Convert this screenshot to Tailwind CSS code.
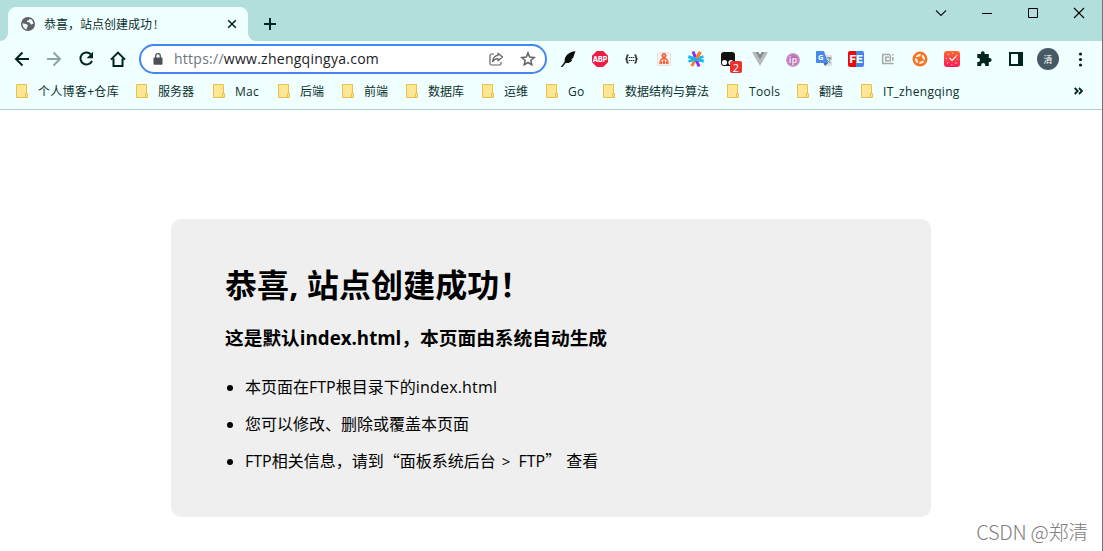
<!DOCTYPE html>
<html lang="zh-CN">
<head>
  <meta charset="UTF-8" />
  <meta name="viewport" content="width=device-width,initial-scale=1" />
  <title>恭喜,站点创建成功!</title>
  <script src="https://cdn.jsdelivr.net/npm/@tailwindcss/browser@4"></script>
</head>
<body class="h-screen overflow-hidden bg-white text-black font-['Open_Sans','Noto_Sans_CJK_SC',sans-serif]">
<div class="relative h-[551px] w-[1103px] overflow-hidden border-r border-[#6f7274]">

  <!-- Tab strip -->
  <div class="flex h-[41px] items-start bg-[#b2dfdb]">
    <div class="flex h-[41px] w-2 items-end bg-[#b2dfdb]">
      <svg class="h-2 w-2" viewBox="0 0 8 8"><path d="M8 0v8H0a8 8 0 0 0 8-8z" fill="#f0ffff"/></svg>
    </div>
    <div class="mt-[7px] flex h-[34px] w-[240px] items-center rounded-t-lg bg-[#f0ffff] pl-[13px] pr-[11px]">
      <svg class="h-[14px] w-[14px] shrink-0" viewBox="0 0 14 14">
        <circle cx="7" cy="7" r="7" fill="#5f6368"/>
        <path d="M1.6 6.2 5 7.1c1 .3 1.9.9 1.9 1.8S5.7 10 5.7 11.2v1.2C3.1 11.8 1.3 9.6 1.5 7zM8.3 1.7C8.5 2.8 7.7 3.4 6.6 3.6c-.9.2-.9 1.5 0 1.7 1 .2 1.5-.2 2.3.5.7.6.2 1.7 1.2 1.8.9.1 1-.7 2.2-.6A5.4 5.4 0 0 0 8.3 1.7z" fill="#f0ffff"/>
      </svg>
      <span class="ml-[9px] grow pt-px whitespace-nowrap text-xs text-[#0c302d]">恭喜，站点创建成功<span class="pl-[2px]">!</span></span>
      <svg class="h-4 w-[10px]" viewBox="0 0 10 16" fill="none" stroke="#00251f" stroke-width="1.6"><path d="m1.2 4.2 7.6 7.6m0-7.6-7.6 7.6"/></svg>
    </div>
    <div class="flex h-[41px] w-2 items-end">
      <svg class="h-2 w-2" viewBox="0 0 8 8"><path d="M0 0v8h8a8 8 0 0 1-8-8z" fill="#f0ffff"/></svg>
    </div>
    <svg class="mt-[18px] ml-[8px] h-3 w-3" viewBox="0 0 12 12" stroke="#00251f" stroke-width="2"><path d="M6 0v12M0 6h12"/></svg>
    <div class="ml-auto flex">
      <svg class="h-[26px] w-[46px]" viewBox="0 0 46 26" fill="none" stroke="#111" stroke-width="1.1"><path d="m18 10.500 5 5 5-5"/></svg>
      <svg class="h-[26px] w-[46px]" viewBox="0 0 46 26" fill="none" stroke="#000"><path d="M18 13.500h10"/></svg>
      <svg class="h-[26px] w-[46px]" viewBox="0 0 46 26" fill="none" stroke="#000"><path d="M18.500 8.500h9v9h-9z"/></svg>
      <svg class="h-[26px] w-[46px]" viewBox="0 0 46 26" fill="none" stroke="#000" stroke-width="1.1"><path d="m18 8 10 10M28 8 18 18"/></svg>
    </div>
  </div>

  <!-- Toolbar -->
  <div class="flex h-9 items-center bg-[#f0ffff] pl-[6px]">
    <svg class="h-9 w-8 shrink-0" viewBox="0 0 32 36" fill="none" stroke="#00251f" stroke-width="2"><path d="M23 18H10m6.500-6.500L10 18l6.500 6.500"/></svg>
    <svg class="h-9 w-8 shrink-0" viewBox="0 0 32 36" fill="none" stroke="#8da5a3" stroke-width="2"><path d="M9 18h13m-6.500-6.500L22 18l-6.500 6.500"/></svg>
    <svg class="h-9 w-8 shrink-0" viewBox="0 0 32 36"><path d="M20.800 13.300A6 6 0 1 0 22 19.800" fill="none" stroke="#00251f" stroke-width="2"/><path d="M23 10.800v6.400h-6.400z" fill="#00251f"/></svg>
    <svg class="h-9 w-8 shrink-0" viewBox="0 0 32 36" fill="none" stroke="#00251f" stroke-width="2"><path d="M11.500 17.500V25h9v-7.500M9 18.600l7-7 7 7"/></svg>

    <div class="ml-[5px] flex h-[30px] w-[408px] shrink-0 items-center rounded-full border-2 border-[#4285f4] bg-white pr-[9px] pl-[12px]">
      <svg class="h-3 w-[10px] shrink-0" viewBox="0 0 10 12"><path d="M1 4.500h8q.5 0 .5.500v6q0 .7-.7.7H1.200q-.7 0-.7-.7V5q0-.5.500-.5z" fill="#4d5156"/><path d="M2.700 5V3a2.300 2.300 0 0 1 4.600 0v2" fill="none" stroke="#4d5156" stroke-width="1.300"/></svg>
      <span class="ml-[11px] grow whitespace-nowrap text-sm tracking-[0.26px] text-[#202124]"><span class="text-[#70757a]">https://</span>www.zhengqingya.com</span>
      <svg class="h-4 w-4" viewBox="0 0 16 16" fill="none" stroke="#5f6368" stroke-width="1.200"><path d="M6 3H3.500Q2 3 2 4.500v8Q2 14 3.500 14h8q1.500 0 1.500-1.500V11"/><path d="M10 2.200 14.500 6 10 9.800V7.600C7.500 7.600 6 8.600 4.600 10.600 5 7 6.800 4.700 10 4.400z" stroke-linejoin="round"/></svg>
      <svg class="ml-4 h-4 w-4" viewBox="0 0 16 16" fill="none" stroke="#5f6368" stroke-width="1.500"><path d="m8 2 1.700 4.100 4.500.4-3.400 3 1 4.300L8 11.500l-3.800 2.300 1-4.300-3.400-3 4.500-.4z"/></svg>
    </div>

    <!-- Extensions -->
    <div class="ml-[5px] flex items-center">
      <svg class="h-9 w-8" viewBox="0 0 32 36"><path d="M23.500 10.200c-6.500.5-11.500 4.500-10.800 10.500L8.800 26h1.600l3.300-3.900c3.300.2 5.500-1 6.600-3.400l-1.400-.2 2.200-1.600c.9-2.500 1.400-4.700 2.400-6.700z" fill="#0b0d0d"/></svg>
      <svg class="h-9 w-8" viewBox="0 0 32 36"><path d="M12.800 10h6.400l4.800 4.800v6.400L19.200 26h-6.400L8 21.200v-6.400z" fill="#ed1e45"/><text x="16" y="21" text-anchor="middle" font-family="Inter" font-size="7.500" font-weight="800" textLength="14.500" lengthAdjust="spacingAndGlyphs" fill="#fff">ABP</text></svg>
      <svg class="h-9 w-8" viewBox="0 0 32 36" fill="none" stroke="#222"><path d="M12.500 14q-1.500 0-1.500 1.500v1q0 1.500-1.500 1.500 1.500 0 1.500 1.500v1q0 1.500 1.500 1.500M18.500 14q1.500 0 1.500 1.500v1q0 1.500 1.500 1.500-1.500 0-1.500 1.500v1q0 1.500-1.500 1.500" stroke-width="1.500"/><path d="M12.700 16.500h1.600m.6 0h1.400m.6 0h1.400m-5.600 3h1.600m.6 0h1.400m.6 0h1.400" stroke-width="1.200"/></svg>
      <svg class="h-9 w-8" viewBox="0 0 32 36"><rect x="9.500" y="11.500" width="13" height="13" rx="1.500" fill="#fbf5f2" stroke="#e2e2e2"/><circle cx="16" cy="14.600" r="1.800" fill="#f9a88e" stroke="#ee663e" stroke-width="1.500"/><g fill="none" stroke="#ee663e" stroke-width="1.400"><path d="M16 16.500V21m-3.500-.5c0-2 1.500-3 3.500-3s3.500 1 3.500 3"/><circle cx="12.700" cy="21.600" r=".9"/><circle cx="16" cy="21.600" r=".9"/><circle cx="19.300" cy="21.600" r=".9"/></g></svg>
      <svg class="h-9 w-8" viewBox="0 0 32 36" stroke-width="3"><path d="m20.300 11-8.600 14" stroke="#ff7a22"/><path d="m13 10.500 6 15" stroke="#8a2cff"/><path d="m8.300 15.800 15.400 4.400" stroke="#18b5ef"/><path d="m8.500 20.500 7.500-2.500 7.500-2.500" stroke="#18b5ef" stroke-width="2.400"/><path d="m16.500 17.500 3.800-6.500" stroke="#ff7a22"/></svg>
      <div class="relative h-9 w-8">
        <svg class="h-9 w-8" viewBox="0 0 32 36"><rect x="9" y="11" width="14" height="14" rx="3" fill="#111"/><circle cx="12.500" cy="21.500" r="2.600" fill="#fff"/><circle cx="19" cy="21.500" r="2.600" fill="#fff"/></svg>
        <span class="absolute top-5 left-[18px] flex h-3 w-3 items-center justify-center rounded-[2px] bg-[#e8322f] text-[11px] leading-none text-white">2</span>
      </div>
      <svg class="h-9 w-8" viewBox="0 0 32 36"><path d="M8 11h3.500l4.500 8 4.500-8H24l-8 14z" fill="#b5bbba"/><path d="M11.500 11h3l1.500 2.700 1.500-2.700h3L16 19z" fill="#878c8c"/></svg>
      <svg class="h-9 w-8" viewBox="0 0 32 36"><defs><radialGradient id="ip"><stop offset="0" stop-color="#b25cad"/><stop offset=".7" stop-color="#bd79bc"/><stop offset="1" stop-color="#d4a8d5"/></radialGradient></defs><circle cx="17" cy="19" r="7" fill="url(#ip)"/><text x="17" y="22" text-anchor="middle" font-family="Open Sans" font-size="9" font-weight="700" fill="#f4dff2">ip</text></svg>
      <svg class="h-9 w-8" viewBox="0 0 32 36"><path d="M14 14h9q1 0 1 1v9q0 1-1 1h-6z" fill="#dce0e4"/><path d="M9 10h7l4 12H9q-1 0-1-1V11q0-1 1-1z" fill="#4889ee"/><path d="m15.500 22 4.500 0-3 3z" fill="#3267ca"/><text x="10" y="18.500" font-family="Open Sans" font-size="7.500" font-weight="700" fill="#fff">G</text><path d="M18.500 17h5M21 16v1m1.500 0q-.8 3-3.500 5m0-3q1.200 2 3.500 3" fill="none" stroke="#71818e"/></svg>
      <svg class="h-9 w-8" viewBox="0 0 32 36"><path d="M10 10h6v16h-6q-2 0-2-2V12q0-2 2-2z" fill="#ed0909"/><path d="M16 10h6q2 0 2 2v12q0 2-2 2h-6z" fill="#4285ef"/><text x="9.500" y="21.800" font-family="Inter" font-size="10.500" font-weight="800" textLength="13.500" lengthAdjust="spacingAndGlyphs" fill="#fff">FE</text></svg>
      <svg class="h-9 w-8" viewBox="0 0 32 36" fill="none" stroke="#a4a8a6" stroke-width="1.500"><path d="M18 13.500h-7.300v9H21.500M17 16.300h-3.200v3.500h4.500v-6M20.800 16v3.800M20.800 13v1.500"/></svg>
      <svg class="h-9 w-8" viewBox="0 0 32 36"><circle cx="16" cy="18" r="7.500" fill="#f57325"/><circle cx="16" cy="18" r="3.900" fill="none" stroke="#fff3db" stroke-width="2.400"/><path d="M16 12v4M16 20v4M10 18h4M18 18h4" transform="rotate(20 16 18)" stroke="#f57325" stroke-width="1.500"/></svg>
      <svg class="h-9 w-8" viewBox="0 0 32 36"><defs><linearGradient id="ck" x2="0" y2="1"><stop stop-color="#ff692f"/><stop offset="1" stop-color="#ff175b"/></linearGradient></defs><rect x="8" y="10" width="16" height="16" rx="3" fill="url(#ck)"/><path d="m13.500 17 2.500 2.500 4-4" fill="none" stroke="#fff" stroke-width="1.200"/><circle cx="16" cy="18" r="5.800" fill="none" stroke="#ffd0c4" stroke-width="1.200" stroke-dasharray="1.200 3.355" stroke-dashoffset=".6"/></svg>
      <svg class="h-9 w-8" viewBox="0 0 32 36"><path d="M9.300 13h3.600v-.8a1.900 1.900 0 0 1 3.800 0v.8h4.100v4.100h.8a2 2 0 0 1 0 4h-.8V25h-3.600v-.9a2 2 0 0 0-4 0v.9H9.300v-4h.8a2 2 0 0 0 0-4h-.8z" fill="#00251f"/></svg>
      <svg class="h-9 w-8" viewBox="0 0 32 36"><path d="M9 11h14v14H9z" fill="#00251f"/><path d="M11 13h7v10h-7z" fill="#f0ffff"/></svg>
      <div class="flex h-9 w-8 items-center justify-center"><span class="flex h-[22px] w-[22px] shrink-0 items-center justify-center rounded-full bg-[#455a64] text-[9px] leading-none text-white">清</span></div>
      <svg class="h-9 w-8" viewBox="0 0 32 36" fill="#00251f"><circle cx="16.500" cy="13" r="1.600"/><circle cx="16.500" cy="18.500" r="1.600"/><circle cx="16.500" cy="24" r="1.600"/></svg>
    </div>
  </div>

  <!-- Bookmarks bar, items are filled in by the script below -->
  <div class="flex h-[33px] items-start border-b border-[#b0cbca] bg-[#f0ffff] pl-4 text-xs text-[#0c302d]">
    <div id="bookmarks" class="flex h-7 grow items-center"></div>
    <svg class="mr-[19px] h-7 w-[9px] shrink-0" viewBox="0 0 9 28" fill="none" stroke="#00251f" stroke-width="1.800"><path d="m.7 11 3 3-3 3m4.300-6 3 3-3 3"/></svg>
  </div>

  <!-- Page -->
  <main class="mt-[109px] ml-[171px] h-[298px] w-[760px] rounded-[10px] bg-[#efefef] pt-[42px] pl-[54px]">
    <h1 class="h-12 text-[32px] leading-[47px] font-bold tracking-[0.1px] whitespace-nowrap">恭喜, 站点创建成功！</h1>
    <h3 class="mt-[15px] h-7 text-[18.720px] leading-7 font-bold whitespace-nowrap">这是默认index.html，本页面由系统自动生成</h3>
    <ul class="mt-[17px] list-disc pl-5 text-base leading-[37px] whitespace-nowrap">
      <li class="h-[37px]">本页面在FTP根目录下的<span class="tracking-[0.2px]">index.html</span></li>
      <li class="h-[37px]">您可以修改、删除或覆盖本页面</li>
      <li class="h-[37px]">FTP相关信息，请到<span class="leading-none font-['Noto_Sans_CJK_SC']">“</span>面板系统后台<span class="pr-[4px] pl-[6px] text-[15px] leading-none">&gt;</span> FTP<span class="leading-none font-['Noto_Sans_CJK_SC']">”</span><span class="pl-[5px]">查看</span></li>
    </ul>
  </main>

  <div class="absolute right-[14px] bottom-[4px] text-[20px] leading-[30px] font-light tracking-[-0.25px] whitespace-nowrap text-[#808080] font-['Noto_Sans_CJK_SC',sans-serif]">CSDN @郑清</div>
</div>

<script>
  const bookmarks = [
    ['个人博客+仓库', 120], ['服务器', 77], ['Mac', 65], ['后端', 64], ['前端', 64], ['数据库', 76],
    ['运维', 64], ['Go', 57], ['数据结构与算法', 124], ['Tools', 70], ['翻墙', 64], ['IT_zhengqing', 110],
  ];
  document.getElementById('bookmarks').innerHTML = bookmarks.map(([name, width]) => `
    <div class="flex shrink-0 items-center whitespace-nowrap" style="width:${width}px">
      <svg class="mr-[10px] h-[14px] w-3 shrink-0" viewBox="0 0 12 14"><path d="M.5.500h10v13H.5z" fill="#ffe694" stroke="#e9c14a"/><path d="M9.500 9.500h2v4h-2z" fill="#ffe694" stroke="#e9c14a"/></svg>
      <span class="pt-0.5 ${/^[A-Z]|\+/.test(name) ? 'tracking-[0.3px]' : ''}">${name}</span>
    </div>`).join('');
</script>
</body>
</html>
